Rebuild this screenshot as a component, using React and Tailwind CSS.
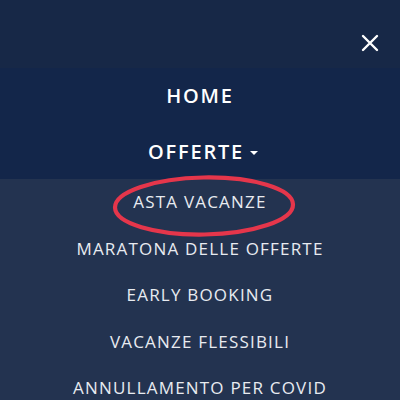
import React from 'react';

const subItems = [
  'ASTA VACANZE',
  'MARATONA DELLE OFFERTE',
  'EARLY BOOKING',
  'VACANZE FLESSIBILI',
  'ANNULLAMENTO PER COVID',
];

const App = () => {
  return (
    <div
      className="w-[400px] h-[400px] overflow-hidden bg-[#233350] text-white"
      style={{ fontFamily: '"Open Sans", "Noto Sans", sans-serif' }}
    >
      {/* top bar */}
      <div className="h-[68px] bg-[#172847] flex items-center justify-end pr-[21px] pt-[18px]">
        <svg width="18" height="18" viewBox="0 0 18 18" fill="none" stroke="white" strokeWidth="2.4" strokeLinecap="round">
          <path d="M2 2 L16 16 M16 2 L2 16" />
        </svg>
      </div>

      {/* main menu */}
      <div className="bg-[#13264a] h-[111px] flex flex-col">
        <div className="h-[56px] flex items-center justify-center text-[20px] font-semibold tracking-[1.8px]">
          HOME
        </div>
        <div className="h-[55px] flex items-center justify-center pl-[6px] text-[20px] font-semibold tracking-[1.8px]">
          OFFERTE
          <span className="ml-[6px] mt-[2px] w-0 h-0 border-l-[4px] border-r-[4px] border-t-[4px] border-l-transparent border-r-transparent border-t-white" />
        </div>
      </div>

      {/* submenu */}
      <div className="flex flex-col">
        {subItems.map((item, i) => (
          <div key={item} className="relative h-[46.4px] flex items-center justify-center text-[17px] tracking-[1.2px] text-[#e8ebf0]">
            {item}
            {i === 0 && (
              <svg className="absolute left-[111px] top-[-5px]" width="186" height="64" viewBox="0 0 186 64" fill="none">
                <ellipse cx="93" cy="32" rx="89" ry="28.5" stroke="#e5364b" strokeWidth="4.2" transform="rotate(-1 93 32)" />
              </svg>
            )}
          </div>
        ))}
      </div>
    </div>
  );
};

export default App;
